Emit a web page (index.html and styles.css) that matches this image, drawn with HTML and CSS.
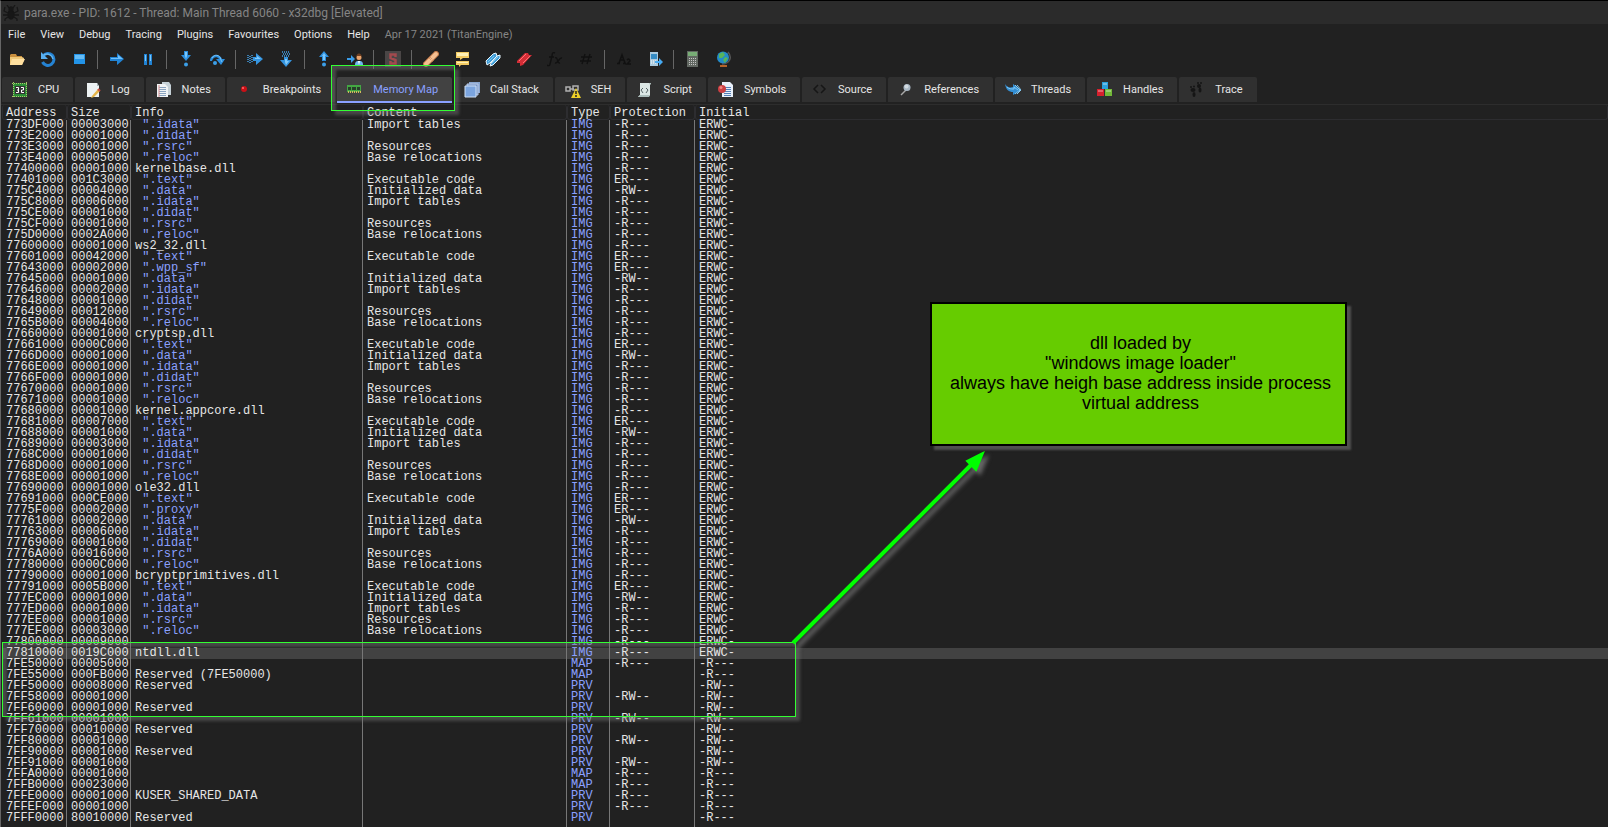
FILE: index.html
```html
<!DOCTYPE html>
<html lang="en">
<head>
<meta charset="utf-8">
<title>x32dbg</title>
<link rel="stylesheet" href="styles.css">
</head>
<body>
<div class="window">
  <header class="titlebar">
    <svg class="icon" viewBox="0 0 16 16" fill="none" stroke="#171717" stroke-width="1.3"><ellipse cx="8" cy="9.500" rx="3" ry="4.500" fill="#171717"/><circle cx="8" cy="4" r="2" fill="#171717"/><path d="M5 8 1 6 2 2M11 8l4-2-1-4M5 10H0M11 10h5M5 12l-3 2v2M11 12l3 2v2M6 3 4 0M10 3l2-3"/></svg>
    <span>para.exe - PID: 1612 - Thread: Main Thread 6060 - x32dbg [Elevated]</span>
  </header>
  <nav class="menu">
    <button>File</button><button>View</button><button>Debug</button><button>Tracing</button><button>Plugins</button><button>Favourites</button><button>Options</button><button>Help</button>
    <span class="build">Apr 17 2021 (TitanEngine)</span>
  </nav>
  <div class="toolbar">
    <button aria-label="Open"><svg class="icon" viewBox="0 0 16 16"><path d="M1 4 2 3h5l1 2h5v3H1z" fill="#c98f3e"/><path d="M1 14V6h12l2 1v2l-2 5z" fill="#efc878"/><path d="M1 14 3 8h13l-3 6z" fill="#ffe0a0"/></svg></button>
    <button aria-label="Restart"><svg class="icon" viewBox="0 0 16 16"><path d="M3 5a6 6 0 1 1-.5 6" fill="none" stroke="#2583d3" stroke-width="3"/><path d="M4 4a6 6 0 0 1 9 4" fill="none" stroke="#61b6f2" stroke-width="1.500"/><path d="M1 1v7h7z" fill="#58aff0"/></svg></button>
    <button aria-label="Stop"><svg class="icon" viewBox="0 0 16 16"><path d="M3 3h11v10H3z" fill="#2394e8"/><path d="M4 4h9v4H4z" fill="#66bcf5"/></svg></button>
    <i class="sep"></i>
    <button aria-label="Run"><svg class="icon" viewBox="0 0 16 16"><path d="M1 6h7V2l7 6-7 6v-4H1z" fill="#2183d4"/><path d="M2 7h7V4l5 4H2z" fill="#6fc0fa"/></svg></button>
    <button aria-label="Pause"><svg class="icon" viewBox="0 0 16 16"><path d="M4 3h3v11H4zM9 3h3v11H9z" fill="#2183d4"/><path d="M5 4h1v6H5zM10 4h1v6h-1z" fill="#7ac6fa"/></svg></button>
    <i class="sep"></i>
    <button aria-label="Step into"><svg class="icon" viewBox="0 0 16 16"><path d="M6 0h4v4h3l-5 6-5-6h3z" fill="#2b8fdf"/><path d="M7 1h2v4l-1 3-1-3z" fill="#7ac6fa"/><circle cx="8" cy="13.500" r="2" fill="#3c9fe8"/></svg></button>
    <button aria-label="Step over"><svg class="icon" viewBox="0 0 16 16"><path d="M1 10c0-7 10-8 12-2h3l-4 6-5-6h3C8 5 4 6 3 10z" fill="#2b8fdf"/><path d="M3 7c2-4 8-4 9 2l1 2" fill="none" stroke="#78c3f6"/><circle cx="6" cy="12" r="2" fill="#3c9fe8"/></svg></button>
    <i class="sep"></i>
    <button aria-label="Trace into"><svg class="icon" viewBox="0 0 16 16"><path d="M6 6h3V2l7 6-7 6v-4H6z" fill="#3595e0"/><path d="M8 7h2V5l4 3H8z" fill="#80c9fa"/><path d="M1 4v8M3 5v8M5 4v8" stroke="#439fe4" stroke-width="1.500" stroke-dasharray="1 1"/></svg></button>
    <button aria-label="Trace over"><svg class="icon" viewBox="0 0 16 16"><path d="M6 6v3H2l6 7 6-7h-4V6z" fill="#3595e0"/><path d="M7 8v3l1 3 3-4H9V8z" fill="#80c9fa"/><path d="M4 1h8M5 3h8M4 5h8" stroke="#439fe4" stroke-width="1.500" stroke-dasharray="1 1"/></svg></button>
    <i class="sep"></i>
    <button aria-label="Execute till return"><svg class="icon" viewBox="0 0 16 16"><path d="M6 10h4V6h3L8 0 3 6h3z" fill="#2b8fdf"/><path d="M7 9h2V5h1L8 2 6 5h1z" fill="#7ac6fa"/><circle cx="8" cy="13.500" r="2" fill="#3c9fe8"/></svg></button>
    <button aria-label="Run to user code"><svg class="icon" viewBox="0 0 16 16"><path d="M0 7h4V4l4 4-4 4V9H0z" fill="#3a9ce8"/><path d="M8 14c0-4 2-4 4-4s4 0 4 4z" fill="#6fb6ed"/><circle cx="12" cy="6.500" r="2.500" fill="#e9a36c"/><path d="M9 7c0-6 6-6 6 0l-1-2h-4z" fill="#704022"/><path d="m11 10 1 4 1-4z" fill="#fff"/></svg></button>
    <i class="sep"></i>
    <button aria-label="Scylla"><svg class="icon" viewBox="0 0 16 16"><path d="M0 0h16v16H0z" fill="#4a4646"/><path d="M10.500 6V3.500h-5V7l5 2v3.500h-5V10" fill="none" stroke="#a34a4e" stroke-width="2.500"/></svg></button>
    <i class="sep"></i>
    <button aria-label="Patches"><svg class="icon" viewBox="0 0 16 16"><path d="m3 13 10-10" stroke="#bf7646" stroke-width="6" stroke-linecap="round"/><path d="m3 13 10-10" stroke="#f5bf91" stroke-width="4" stroke-linecap="round"/><path d="m6 7 4 4M7 6l4 4" stroke="#c98459" stroke-dasharray="1 1"/></svg></button>
    <button aria-label="Comments"><svg class="icon" viewBox="0 0 16 16"><path d="M2 1h13v6H9L6 9V7H2zM2 10h13v4H7l-2 2v-2H2z" fill="#f2ca62"/><path d="M3 2h11v3H3zM3 11h11v1H3z" fill="#fff0b5"/></svg></button>
    <button aria-label="Labels"><svg class="icon" viewBox="0 0 16 16"><path d="m1 10 7-7 3-1 1 3-7 7-3 2zM6 12l6-7 3-1v3l-7 7-3 1z" fill="#409bd6" stroke="#e8f8ff"/><path d="m3 11 6-6M7 12l6-6" stroke="#76c8f0"/></svg></button>
    <button aria-label="Bookmarks"><svg class="icon" viewBox="0 0 16 16"><path d="m1 10 8-8h3l1 2h3l-9 10-3 1v-3H1z" fill="#d52d36"/><path d="m3 10 7-7M7 12l7-7" stroke="#ff7073"/></svg></button>
    <button aria-label="Functions"><svg class="icon" viewBox="0 0 16 16" fill="none" stroke="#111" stroke-width="1.400"><path d="M8 2C6 1 5 2 5 5L3 13c0 2-2 2-3 1M2 6h5M8 7c3-2 2 6 5 5M15 7c-3-1-4 6-7 5"/></svg></button>
    <button aria-label="Variables"><svg class="icon" viewBox="0 0 16 16" fill="none" stroke="#111" stroke-width="1.400"><path d="M7 3 4 13M12 3 9 13M3 6h11M2 10h11"/></svg></button>
    <i class="sep"></i>
    <button aria-label="Strings"><svg class="icon" viewBox="0 0 16 16" fill="none" stroke="#111" stroke-width="1.500"><path d="m3 12 3-8 3 8M1 12.500h3M7 12.500h3M4 9h4M11 9c2-2 3 0 3 1l-3 3h4"/></svg></button>
    <button aria-label="Intermodular calls"><svg class="icon" viewBox="0 0 16 16"><path d="M3 1h8v14H3z" fill="#a9c9de"/><path d="M4 3h6v5H4z" fill="#348bc4"/><path d="M4 10h6M4 12h6" stroke="#fff" stroke-dasharray="1 1"/><path d="M8 10h4V7l4 4-4 4v-3H8z" fill="#46aaf2"/></svg></button>
    <i class="sep"></i>
    <button aria-label="Calculator"><svg class="icon" viewBox="0 0 16 16"><path d="M2 0h11v16H2z" fill="#626862"/><path d="M3 1h9v4H3z" fill="#78ad76"/><path d="M4 7.500h8M4 9.500h8M4 11.500h8M4 13.500h8" stroke="#c6c6c6" stroke-dasharray="1 1"/></svg></button>
    <button aria-label="Check for updates"><svg class="icon" viewBox="0 0 16 16"><path d="M12 1c5 6 1 12-6 12" fill="none" stroke="#555" stroke-width="1.500"/><circle cx="7" cy="6.500" r="6" fill="#238bc9"/><path d="M3 3 7 1l2 3-3 3H3zM9 6l3 1-3 5-2-3z" fill="#57b45b"/><path d="M4 15h7" stroke="#b46329" stroke-width="2"/></svg></button>
  </div>
  <div class="tabs" role="tablist">
    <button role="tab"><svg class="icon" viewBox="0 0 16 16"><path d="M1 1h14v14H1z" fill="#2b8d35"/><path d="M0 1.500h16M0 14.500h16M1.500 0v16M14.500 0v16" stroke="#a8c66b" stroke-dasharray="1 1"/><path d="M3 4h10v8H3z" fill="#333"/><path d="M4 5.500h2.500v5H4M5 8h1.500M9 5.500h2.500V8H9.500v2.500H12" fill="none" stroke="#fff"/></svg><span>CPU</span></button>
    <button role="tab"><svg class="icon" viewBox="0 0 16 16"><path d="M2 1h10l2 3v11H2z" fill="#edf2f3"/><path d="M12 1v3h2z" fill="#a8b4b7"/><path d="m7 14 6-7 2 2-6 6-3 1z" fill="#e4b448"/><path d="m13 7 2 2" stroke="#c84b45" stroke-width="2"/></svg><span>Log</span></button>
    <button role="tab"><svg class="icon" viewBox="0 0 16 16"><path d="M6 0h7l2 3v10H6z" fill="#c6d2d8"/><path d="M1 2h8l3 3v10H1z" fill="#f0f4f6"/><path d="M3 5.500h7M3 7.500h7M3 9.500h7M3 11.500h7M3 13.500h7" stroke="#8aa4c0"/><path d="M3 3v12" stroke="#d98d8d"/></svg><span>Notes</span></button>
    <button role="tab"><svg class="icon" viewBox="0 0 16 16"><circle cx="7" cy="7" r="3" fill="#c91017"/><circle cx="6" cy="6" r="1" fill="#ff6c6c"/></svg><span>Breakpoints</span></button>
    <button role="tab" class="active" aria-selected="true"><svg class="icon" viewBox="0 0 16 16"><path d="M0 3h14v7H0z" fill="#43a643"/><path d="M1 5h3v3H1zM5 5h4v3H5zM10 5h3v3h-3z" fill="#283d2a"/><path d="M1 10h13" stroke="#d4ba5c" stroke-width="2" stroke-dasharray="1 1"/></svg><span>Memory Map</span></button>
    <button role="tab"><svg class="icon" viewBox="0 0 16 16"><path d="M5 0h11v11H5z" fill="#8aa6d0"/><path d="M3 2h11v11H3z" fill="#7594c7" stroke="#bacae7"/><path d="M1 4h11v11H1z" fill="#7ba4de" stroke="#d0e1f6"/></svg><span>Call Stack</span></button>
    <button role="tab"><svg class="icon" viewBox="0 0 16 16"><path d="M1 5h4v4H1zM8 4h5v4H8zM5 7h4" fill="none" stroke="#b0b0b0" stroke-width="1.500"/><path d="m11 6 5 10H6z" fill="#edcf28"/><path d="M11 9v3M11 13v2" stroke="#222" stroke-width="1.500"/></svg><span>SEH</span></button>
    <button role="tab"><svg class="icon" viewBox="0 0 16 16"><path d="M3 1h11l-1 2v10l-1 2H1l2-2z" fill="#dce7e5"/><path d="M12 1h2l-1 2zM1 15l2-2h9v2z" fill="#adbfbd"/><path d="M6 6 4 8l2 3M9 6l2 2-2 3" fill="none" stroke="#586567"/></svg><span>Script</span></button>
    <button role="tab"><svg class="icon" viewBox="0 0 16 16"><path d="M4 0h8l3 3v12H4z" fill="#e9f0fa"/><path d="M6 5.500h7M6 7.500h7M6 9.500h7M6 11.500h7M6 13.500h7" stroke="#557fb6"/><circle cx="4" cy="7" r="4" fill="#cc3e42"/><circle cx="3" cy="5.500" r="1.500" fill="#ef8580"/></svg><span>Symbols</span></button>
    <button role="tab"><svg class="icon" viewBox="0 0 16 16" fill="none" stroke="#161616" stroke-width="1.500"><path d="M6 3 2 7l4 4M9 3l4 4-4 4"/></svg><span>Source</span></button>
    <button role="tab"><svg class="icon" viewBox="0 0 16 16"><path d="m3 13 5-5" stroke="#a8a8a8" stroke-width="1.500"/><circle cx="9" cy="5.500" r="3.500" fill="#a9b8c5"/><circle cx="8.500" cy="4.500" r="2" fill="#d3dbe1"/></svg><span>References</span></button>
    <button role="tab"><svg class="icon" viewBox="0 0 16 16"><path d="M0 2c2 3 4 4 8 3V2l8 6-8 5v-3C4 10 1 8 0 2z" fill="#348fd4"/><path d="M2 5c2 2 4 2 7 2V5l4 3M10 3l5 5-5 4M12 3l4 5-4 4" fill="none" stroke="#83c9f2"/></svg><span>Threads</span></button>
    <button role="tab"><svg class="icon" viewBox="0 0 16 16"><path d="M5 0h6v7H5z" fill="#2aa1dd"/><path d="M0 7h7v7H0z" fill="#d7202d"/><path d="M8 7h7v7H8z" fill="#72b938"/><path d="M6 1h4v2H6zM1 8h5v2H1zM9 8h5v2H9z" fill="#fff" fill-opacity=".3"/></svg><span>Handles</span></button>
    <button role="tab"><svg class="icon" viewBox="0 0 16 16" fill="#151515"><ellipse cx="4" cy="8" rx="2.500" ry="2"/><ellipse cx="5" cy="12.500" rx="1.500" ry="2.500"/><ellipse cx="10" cy="4" rx="2" ry="2"/><ellipse cx="11" cy="8" rx="1.500" ry="2.500"/><circle cx="2" cy="5" r="1"/><circle cx="5" cy="4.500" r="1"/><circle cx="9" cy="1" r="1"/><circle cx="12" cy="1" r="1"/></svg><span>Trace</span></button>
  </div>
  <main class="view">
    <table class="memory">
      <colgroup><col class="c-addr"><col class="c-size"><col class="c-info"><col class="c-content"><col class="c-type"><col class="c-prot"><col></colgroup>
      <thead><tr><th>Address</th><th>Size</th><th>Info</th><th>Content</th><th>Type</th><th>Protection</th><th>Initial</th></tr></thead>
      <tbody id="rows"></tbody>
    </table>
  </main>
  <div class="mark mark-tab"></div>
  <div class="mark mark-rows"></div>
  <svg class="arrow" viewBox="0 0 210 210"><path d="M4 202 182 24" stroke="#0f0" stroke-width="4"/><path d="M194 12 178 20 187 29z" fill="#0f0" stroke="#0f0" stroke-width="2"/></svg>
  <p class="callout">dll loaded by<br>"windows image loader"<br>always have heigh base address inside process<br>virtual address</p>
</div>
<script src="rows.js"></script>
</body>
</html>
```
FILE: rows.js
```js
const sections = {
  ".text": ["Executable code", "ER---"],
  ".data": ["Initialized data", "-RW--"],
  ".idata": ["Import tables", "-R---"],
  ".didat": ["", "-R---"],
  ".rsrc": ["Resources", "-R---"],
  ".reloc": ["Base relocations", "-R---"],
  ".wpp_sf": ["", "ER---"],
  ".proxy": ["", "ER---"]
};

const images = `773DF000 00003000 .idata
773E2000 00001000 .didat
773E3000 00001000 .rsrc
773E4000 00005000 .reloc
77400000 00001000 kernelbase.dll
77401000 001C3000 .text
775C4000 00004000 .data
775C8000 00006000 .idata
775CE000 00001000 .didat
775CF000 00001000 .rsrc
775D0000 0002A000 .reloc
77600000 00001000 ws2_32.dll
77601000 00042000 .text
77643000 00002000 .wpp_sf
77645000 00001000 .data
77646000 00002000 .idata
77648000 00001000 .didat
77649000 00012000 .rsrc
7765B000 00004000 .reloc
77660000 00001000 cryptsp.dll
77661000 0000C000 .text
7766D000 00001000 .data
7766E000 00001000 .idata
7766F000 00001000 .didat
77670000 00001000 .rsrc
77671000 00001000 .reloc
77680000 00001000 kernel.appcore.dll
77681000 00007000 .text
77688000 00001000 .data
77689000 00003000 .idata
7768C000 00001000 .didat
7768D000 00001000 .rsrc
7768E000 00001000 .reloc
77690000 00001000 ole32.dll
77691000 000CE000 .text
7775F000 00002000 .proxy
77761000 00002000 .data
77763000 00006000 .idata
77769000 00001000 .didat
7776A000 00016000 .rsrc
77780000 0000C000 .reloc
77790000 00001000 bcryptprimitives.dll
77791000 0005B000 .text
777EC000 00001000 .data
777ED000 00001000 .idata
777EE000 00001000 .rsrc
777EF000 00003000 .reloc
77800000 00009000
77810000 0019C000 ntdll.dll`.split("\n").map(line => {
  const [address, size, name = ""] = line.split(" ");
  const [content, protection] = sections[name] || ["", "-R---"];
  return [address, size, sections[name] ? ` "${name}"` : name, content, "IMG", protection, "ERWC-"];
});

const others = [
  ["7FE50000", "00005000", "", "", "MAP", "-R---", "-R---"],
  ["7FE55000", "000FB000", "Reserved (7FE50000)", "", "MAP", "", "-R---"],
  ["7FF50000", "00008000", "Reserved", "", "PRV", "", "-RW--"],
  ["7FF58000", "00001000", "", "", "PRV", "-RW--", "-RW--"],
  ["7FF60000", "00001000", "Reserved", "", "PRV", "", "-RW--"],
  ["7FF61000", "00001000", "", "", "PRV", "-RW--", "-RW--"],
  ["7FF70000", "00010000", "Reserved", "", "PRV", "", "-RW--"],
  ["7FF80000", "00001000", "", "", "PRV", "-RW--", "-RW--"],
  ["7FF90000", "00001000", "Reserved", "", "PRV", "", "-RW--"],
  ["7FF91000", "00001000", "", "", "PRV", "-RW--", "-RW--"],
  ["7FFA0000", "00001000", "", "", "MAP", "-R---", "-R---"],
  ["7FFB0000", "00023000", "", "", "MAP", "-R---", "-R---"],
  ["7FFE0000", "00001000", "KUSER_SHARED_DATA", "", "PRV", "-R---", "-R---"],
  ["7FFEF000", "00001000", "", "", "PRV", "-R---", "-R---"],
  ["7FFF0000", "80010000", "Reserved", "", "PRV", "", "-R---"]
];

const body = document.getElementById("rows");
for (const cells of [...images, ...others]) {
  const row = body.insertRow();
  if (cells[2] === "ntdll.dll") row.className = "selected";
  cells.forEach((text, i) => {
    const cell = row.insertCell();
    cell.textContent = text;
    if (i === 4 || text.startsWith(" ")) cell.className = "accent";
  });
}
```
FILE: styles.css
```css
* { box-sizing: border-box; }
body {
  margin: 0;
  background: #212121;
  color: #e6e6e6;
  font: 12px/16px Roboto, "Open Sans", sans-serif;
  overflow: hidden;
}
button {
  margin: 0;
  padding: 0;
  border: 0;
  background: none;
  color: inherit;
  font: inherit;
}
.icon { width: 16px; height: 16px; flex: none; display: block; }
.window {
  position: relative;
  height: 100vh;
  display: flex;
  flex-direction: column;
  border-top: 1px solid #000;
  border-left: 1px solid #666;
  overflow: hidden;
}
.titlebar {
  flex: none;
  height: 23px;
  padding-left: 2px;
  display: flex;
  align-items: center;
  gap: 5px;
  background: #2b2b2b;
  color: #858585;
}
.menu {
  flex: none;
  height: 21px;
  padding-left: 7px;
  display: flex;
  align-items: center;
  gap: 15px;
  font-size: 11px;
}
.build { color: #858585; }
.toolbar {
  flex: none;
  height: 28px;
  display: flex;
  align-items: center;
}
.toolbar button {
  width: 31px;
  height: 24px;
  display: flex;
  align-items: center;
  justify-content: center;
}
.sep { width: 7px; height: 19px; display: flex; justify-content: center; }
.sep::before { content: ""; width: 1px; background: #666; }
.tabs {
  flex: none;
  height: 30px;
  padding: 4px 0 0 1px;
  display: flex;
  align-items: flex-start;
  gap: 2px;
  font-size: 11px;
}
.tabs button {
  height: 25px;
  padding: 0 14px 0 10px;
  display: flex;
  align-items: center;
  gap: 10px;
  background: #303030;
  border-radius: 2px 2px 0 0;
  white-space: nowrap;
}
.tabs .active {
  height: 26px;
  padding-top: 2px;
  background: #424242;
  border-bottom: 2px solid #8aa0ff;
  color: #8aa0ff;
}
.view {
  flex: 1;
  min-height: 0;
  margin-top: 1px;
  border-top: 1px solid #2d2d2d;
  padding-left: 1px;
  overflow: hidden;
}
.memory {
  width: 100%;
  table-layout: fixed;
  border-collapse: separate;
  border-spacing: 0;
  font: 12px/11px "Liberation Mono", "Courier New", monospace;
}
.c-addr { width: 65px; }
.c-size { width: 64px; }
.c-info { width: 232px; }
.c-content { width: 204px; }
.c-type { width: 43px; }
.c-prot { width: 85px; }
.memory th {
  height: 15px;
  padding: 2px 3px 0;
  border: 1px solid #2d2d30;
  border-top: 0;
  border-radius: 3px;
  text-align: left;
  font-weight: 400;
}
.memory td {
  height: 11px;
  padding: 0 0 0 4px;
  border-right: 1px solid #777;
  vertical-align: top;
  white-space: pre;
}
.memory tr:last-child td { padding-bottom: 4px; }
.memory td:last-child { border-right: 0; }
.memory .accent { color: #8aa0ff; }
.selected { background: #424242; }
.mark {
  position: absolute;
  border: 1px solid #3f3;
  box-shadow: 4px 4px 3px rgba(120, 120, 120, .45), inset 4px 4px 3px rgba(120, 120, 120, .45);
}
.mark-tab { left: 330px; top: 64px; width: 124px; height: 46px; }
.mark-rows { left: 1px; top: 641px; width: 794px; height: 75px; }
.arrow {
  position: absolute;
  left: 788px;
  top: 440px;
  width: 210px;
  height: 210px;
  filter: drop-shadow(4px 4px 2px #666);
}
.callout {
  position: absolute;
  left: 929px;
  top: 301px;
  width: 417px;
  margin: 0;
  padding: 29px 8px 31px 12px;
  border: 2px solid #000;
  background: #6c0;
  box-shadow: 4px 4px 2px #505050;
  color: #000;
  text-align: center;
  font: 18px/20px "Liberation Sans", Arial, sans-serif;
  white-space: nowrap;
}
```
